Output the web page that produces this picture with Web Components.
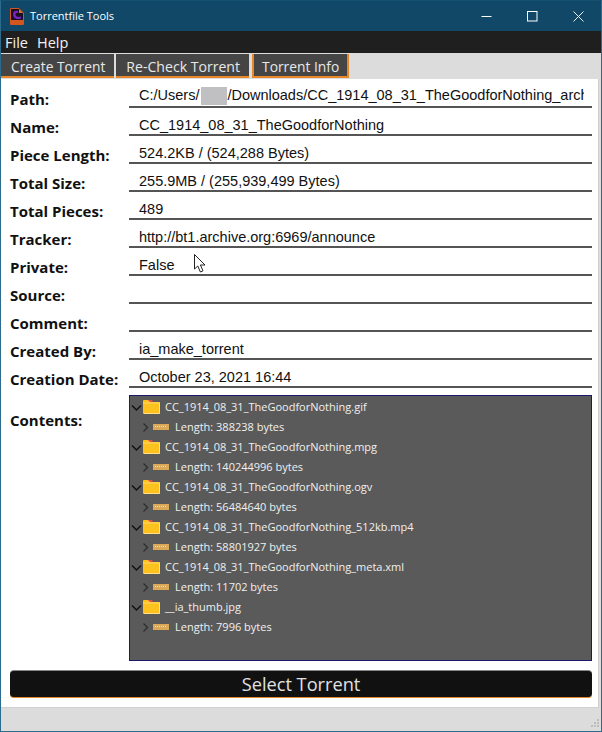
<!DOCTYPE html>
<html>
<head>
<meta charset="utf-8">
<title>Torrentfile Tools</title>
<style>
  html, body { margin: 0; padding: 0; height: 100%; }
  body { overflow: hidden; background: #dcdcdc; }
</style>
</head>
<body>
<app-window>
  <title-bar>Torrentfile Tools</title-bar>
  <menu-bar></menu-bar>
  <tab-bar></tab-bar>
  <info-panel>
    <info-row label="Path:" redact>C:/Users/</info-row>
    <info-row label="Name:">CC_1914_08_31_TheGoodforNothing</info-row>
    <info-row label="Piece Length:">524.2KB / (524,288 Bytes)</info-row>
    <info-row label="Total Size:">255.9MB / (255,939,499 Bytes)</info-row>
    <info-row label="Total Pieces:">489</info-row>
    <info-row label="Tracker:">http://bt1.archive.org:6969/announce</info-row>
    <info-row label="Private:">False</info-row>
    <info-row label="Source:"></info-row>
    <info-row label="Comment:"></info-row>
    <info-row label="Created By:">ia_make_torrent</info-row>
    <info-row label="Creation Date:">October 23, 2021 16:44</info-row>
    <file-tree>
      <tree-file name="CC_1914_08_31_TheGoodforNothing.gif" size="388238"></tree-file>
      <tree-file name="CC_1914_08_31_TheGoodforNothing.mpg" size="140244996"></tree-file>
      <tree-file name="CC_1914_08_31_TheGoodforNothing.ogv" size="56484640"></tree-file>
      <tree-file name="CC_1914_08_31_TheGoodforNothing_512kb.mp4" size="58801927"></tree-file>
      <tree-file name="CC_1914_08_31_TheGoodforNothing_meta.xml" size="11702"></tree-file>
      <tree-file name="__ia_thumb.jpg" size="7996"></tree-file>
    </file-tree>
    <select-button>Select Torrent</select-button>
  </info-panel>
  <status-bar></status-bar>
</app-window>

<script>
// small helper, every element just sets its shadow html
function shadow(el, html) {
  el.attachShadow({ mode: 'open' });
  el.shadowRoot.innerHTML = html;
}

class AppWindow extends HTMLElement {
  constructor() {
    super();
    shadow(this, `
      <style>
        :host { display: flex; flex-direction: column; position: relative; box-sizing: border-box;
                width: 602px; height: 732px; border: 1px solid #2c6a8e; border-top-color: #14506f; background: #dcdcdc; }
        svg { position: absolute; left: 192px; top: 252px; }
      </style>
      <slot></slot>
      <svg width="14" height="21" viewBox="0 0 14 21">
        <path d="M1.5 1.5 L1.5 16 L4.8 13 L7.4 19 L10 17.8 L7.4 12 L12 12 Z" fill="#fff" stroke="#222" stroke-width="1" stroke-linejoin="miter"/>
      </svg>`);
  }
}

class TitleBar extends HTMLElement {
  constructor() {
    super();
    shadow(this, `
      <style>
        :host { display: flex; align-items: center; height: 30px; flex: none; background: #114767; color: #fff;
                font: 11px "Open Sans", "Liberation Sans", sans-serif; }
        .logo { margin: 0 6px 0 9px; display: block; }
        .text { flex: 1; padding-bottom: 1px; }
        .btn { width: 46px; height: 30px; display: flex; align-items: center; justify-content: center; }
      </style>
      <svg class="logo" width="14" height="17" viewBox="0 0 14 17">
        <path d="M0.5 0.5 H9 L13.5 5 V16.5 H0.5 Z" fill="#1a1020" stroke="#d2561f"/>
        <path d="M9 1 L13 5 H9 Z" fill="#e0703a"/>
        <rect x="1" y="12" width="12" height="4" fill="#d2561f"/>
        <path d="M3 6 C3 3 6 2 8 3 L8 5 C6.5 4.5 5.5 5.5 5.5 6.5 C5.5 8.5 8 9.5 11 8.5 L11 10.5 C7 12 3 10.5 3 6 Z" fill="#7a22c8"/>
      </svg>
      <span class="text"><slot></slot></span>
      <span class="btn"><svg width="11" height="11" viewBox="0 0 11 11"><path d="M0.5 5.5 H10.5" stroke="#fff" fill="none"/></svg></span>
      <span class="btn"><svg width="11" height="11" viewBox="0 0 11 11"><rect x="0.5" y="0.5" width="9.5" height="9.5" stroke="#fff" fill="none"/></svg></span>
      <span class="btn"><svg width="11" height="11" viewBox="0 0 11 11"><path d="M0.5 0.5 L10.5 10.5 M10.5 0.5 L0.5 10.5" stroke="#eee" fill="none"/></svg></span>`);
  }
}

class MenuBar extends HTMLElement {
  constructor() {
    super();
    shadow(this, `
      <style>
        :host { display: flex; gap: 9px; align-items: center; height: 22px; flex: none; padding-left: 4px;
                background: #1f1f1f; color: #f2f2f2; font: 14.5px "Open Sans", "Liberation Sans", sans-serif; }
      </style>
      <span>File</span><span>Help</span>`);
  }
}

class TabBar extends HTMLElement {
  constructor() {
    super();
    shadow(this, `
      <style>
        :host { display: flex; gap: 2px; height: 25px; flex: none; background: #dcdcdc;
                font: 13.8px "Open Sans", "Liberation Sans", sans-serif; color: #e8e8e8; }
        span { display: flex; align-items: center; box-sizing: border-box; height: 24px; margin-top: 1px; padding: 2px 9px 0 10px; background: #454545;
               border-bottom: 2px solid #e8862a; }
        .wide { font-size: 14.1px; }
        .on { border-left: 2px solid #e8862a; border-right: 2px solid #e8862a; padding: 2px 8px 0; margin-left: 1px; }
      </style>
      <span>Create Torrent</span><span class="wide">Re-Check Torrent</span><span class="on">Torrent Info</span>`);
  }
}

class InfoPanel extends HTMLElement {
  constructor() {
    super();
    shadow(this, `
      <style>
        :host { display: flex; flex-direction: column; flex: 1; min-height: 0; box-sizing: border-box; background: #fff;
                padding: 1px 6px 10px 9px; margin: 1px 2px 0 0; border-bottom: 1px solid #d0d0d0; border-right: 1px solid #d0d0d0; }
      </style>
      <slot></slot>`);
  }
}

class InfoRow extends HTMLElement {
  constructor() {
    super();
    const redact = this.hasAttribute('redact');
    shadow(this, `
      <style>
        :host { display: grid; grid-template-columns: 119px minmax(0, 1fr); height: 28px; flex: none; }
        .label { align-self: end; font: bold 15px/20px "Open Sans", "Liberation Sans", sans-serif; color: #111; position: relative; top: 1px; white-space: nowrap; }
        .value { display: flex; align-items: flex-end; min-width: 0; border-bottom: 2px solid #555; box-sizing: border-box; padding: 0 8px 1px 10px; white-space: nowrap;
                 font: 14.5px/15px "Liberation Sans", Arial, sans-serif; color: #111; }
        .clip { flex: 1; min-width: 0; overflow-x: clip; overflow-y: visible; }
        .blur { display: inline-block; width: 26px; height: 18px; margin-left: 2px; background: #c0bfc1; vertical-align: -5px; }
      </style>
      <span class="label">${this.getAttribute('label')}</span>
      <span class="value"><span class="clip"><slot></slot>${redact ? '<span class="blur"></span>/Downloads/CC_1914_08_31_TheGoodforNothing_arch' : ''}</span></span>`);
  }
}

class FileTree extends HTMLElement {
  constructor() {
    super();
    shadow(this, `
      <style>
        :host { display: grid; grid-template-columns: 119px minmax(0, 1fr); height: 266px; flex: none; margin-top: 7px; margin-bottom: 9px; }
        .label { font: bold 15px/20px "Open Sans", "Liberation Sans", sans-serif; color: #111; padding-top: 15px; }
        .box { box-sizing: border-box; background: #5a5a5a; border: 1px solid #1b1b6e; padding: 1px 0; }
      </style>
      <span class="label">Contents:</span>
      <div class="box"><slot></slot></div>`);
  }
}

class TreeFile extends HTMLElement {
  constructor() {
    super();
    shadow(this, `
      <style>
        :host { display: block; color: #f0f0f0; font: 11px/20px "Open Sans", "Liberation Sans", sans-serif; }
        .row { display: flex; align-items: center; height: 20px; white-space: nowrap; }
        .folder { padding-left: 1px; }
        .length { padding-left: 10px; }
        .arrow { width: 11px; flex: none; }
        .icon { margin: 0 5px 0 1px; flex: none; }
        .ruler { margin: 0 6px 0 2px; flex: none; }
      </style>
      <div class="row folder">
        <svg class="arrow" width="11" height="11" viewBox="0 0 11 11"><path d="M1 3.5 L5.5 8 L10 3.5" stroke="#111" stroke-width="1.5" fill="none"/></svg>
        <svg class="icon" width="17" height="14" viewBox="0 0 17 14">
          <path d="M0 1 Q0 0 1 0 H6 L8 2 H16 Q17 2 17 3 V13 Q17 14 16 14 H1 Q0 14 0 13 Z" fill="#fdc21e"/>
          <path d="M5 0 H9 L10 2 H7 Z" fill="#e8484c"/>
          <path d="M0 3 H17" stroke="#ffdc6a"/>
          <path d="M16.5 3 V13.5 H1" stroke="#ffe08a" fill="none"/>
        </svg>
        <span>${this.getAttribute('name')}</span>
      </div>
      <div class="row length">
        <svg class="arrow" width="9" height="11" viewBox="0 0 9 11"><path d="M2.5 1.5 L6.5 5.5 L2.5 9.5" stroke="#2e2e2e" stroke-width="1.3" fill="none"/></svg>
        <svg class="ruler" width="16" height="6" viewBox="0 0 16 6">
          <rect width="16" height="6" fill="#d9a95a"/>
          <path d="M2 2.5 H14" stroke="#f3e2b4" stroke-dasharray="1 1"/>
        </svg>
        <span>Length: ${this.getAttribute('size')} bytes</span>
      </div>`);
  }
}

class SelectButton extends HTMLElement {
  constructor() {
    super();
    shadow(this, `
      <style>
        :host { display: flex; align-items: center; justify-content: center; box-sizing: border-box; height: 28px; flex: none;
                background: #111; color: #e0e0e0; border-radius: 4px; border-top: 1px solid #888; border-bottom: 1px solid #e8862a;
                font: 18.2px "Open Sans", "Liberation Sans", sans-serif; }
      </style>
      <slot></slot>`);
  }
}

class StatusBar extends HTMLElement {
  constructor() {
    super();
    shadow(this, `
      <style>
        :host { display: flex; justify-content: flex-end; align-items: flex-end; height: 22px; flex: none; background: #dcdcdc; padding: 0 1px 1px 0; }
      </style>
      <svg width="11" height="11" viewBox="0 0 11 11" fill="#bdbdbd">
        <rect x="8" y="0" width="2" height="2"/><rect x="5" y="3" width="2" height="2"/><rect x="8" y="3" width="2" height="2"/>
        <rect x="2" y="6" width="2" height="2"/><rect x="5" y="6" width="2" height="2"/><rect x="8" y="6" width="2" height="2"/>
      </svg>`);
  }
}

customElements.define('app-window', AppWindow);
customElements.define('title-bar', TitleBar);
customElements.define('menu-bar', MenuBar);
customElements.define('tab-bar', TabBar);
customElements.define('info-panel', InfoPanel);
customElements.define('info-row', InfoRow);
customElements.define('file-tree', FileTree);
customElements.define('tree-file', TreeFile);
customElements.define('select-button', SelectButton);
customElements.define('status-bar', StatusBar);
</script>
</body>
</html>
